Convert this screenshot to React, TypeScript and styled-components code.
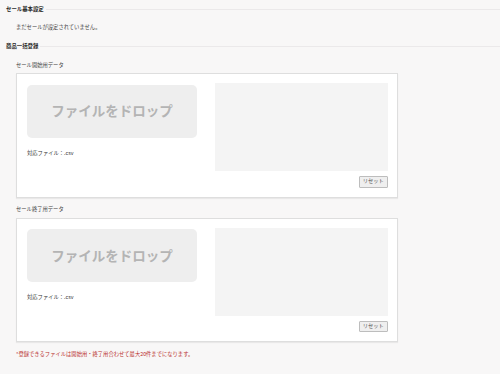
import styled, { createGlobalStyle } from 'styled-components';

const GlobalStyle = createGlobalStyle`
  html, body {
    margin: 0;
    padding: 0;
    background: #f8f7f7;
  }
  body {
    font-family: "Noto Sans CJK JP", "Noto Sans", sans-serif;
    color: #333;
  }
`;

const Page = styled.div`
  width: 500px;
  height: 374px;
  padding-top: 6px;
  box-sizing: border-box;
  overflow: hidden;
`;

const Heading = styled.h2<{ $gap: number }>`
  display: flex;
  align-items: center;
  gap: 2px;
  margin: ${({ $gap }) => $gap}px 0 0;
  padding-left: 6px;
  font-size: 5.4px;
  line-height: 7px;
  font-weight: bold;
  color: #2b2b2b;

  &::after {
    content: '';
    flex: 1;
    height: 1.7px;
    background: #ebe9ea;
  }
`;

const Section = styled.div`
  padding-left: 16px;
`;

const Message = styled.p`
  margin: 11px 0 0;
  font-size: 5.3px;
  line-height: 7px;
  color: #444;
`;

const Label = styled.div<{ $gap: number }>`
  margin-top: ${({ $gap }) => $gap}px;
  font-size: 5.3px;
  line-height: 7px;
  color: #444;
`;

const Card = styled.div`
  width: 382px;
  box-sizing: border-box;
  margin-top: 4.5px;
  padding: 9px 9px 9px 10px;
  background: #fff;
  border: 1px solid #dedede;
  box-shadow: 0 1px 1px rgba(0, 0, 0, 0.06);
  display: grid;
  grid-template-columns: 170px 1fr;
  column-gap: 17.5px;
  row-gap: 5px;
`;

const DropColumn = styled.div`
  display: flex;
  flex-direction: column;
`;

const DropZone = styled.div`
  margin-top: 1.5px;
  height: 53px;
  border-radius: 5px;
  background: #eeeeee;
  display: flex;
  align-items: center;
  justify-content: center;
  padding-bottom: 2px;
  box-sizing: border-box;
  font-size: 13.5px;
  font-weight: bold;
  color: #b4b4b4;
`;

const Caption = styled.div`
  margin-top: 12px;
  font-size: 5.3px;
  line-height: 7px;
  color: #333;
`;

const Preview = styled.div`
  height: 88px;
  background: #f4f4f4;
`;

const ResetButton = styled.button`
  grid-column: 2;
  justify-self: end;
  width: 29.5px;
  height: 11.5px;
  padding: 0;
  box-sizing: border-box;
  border: 1px solid #bdbdbd;
  border-radius: 1px;
  background: #efefef;
  font-family: inherit;
  font-size: 5.3px;
  line-height: 7px;
  color: #555;
  display: flex;
  align-items: center;
  justify-content: center;
`;

const Note = styled.p`
  margin: 9px 0 0;
  font-size: 5.3px;
  line-height: 7px;
  color: #b8302e;
`;

const UploadCard: React.FC = () => (
  <Card>
    <DropColumn>
      <DropZone>ファイルをドロップ</DropZone>
      <Caption>対応ファイル：.csv</Caption>
    </DropColumn>
    <Preview />
    <ResetButton type="button">リセット</ResetButton>
  </Card>
);

export default function App() {
  return (
    <>
      <GlobalStyle />
      <Page>
        <Heading $gap={0}>セール基本設定</Heading>
        <Section>
          <Message>まだセールが設定されていません。</Message>
        </Section>
        <Heading $gap={12}>商品一括登録</Heading>
        <Section>
          <Label $gap={11.5}>セール開始用データ</Label>
          <UploadCard />
          <Label $gap={8.5}>セール終了用データ</Label>
          <UploadCard />
          <Note>*登録できるファイルは開始用・終了用合わせて最大20件までになります。</Note>
        </Section>
      </Page>
    </>
  );
}
